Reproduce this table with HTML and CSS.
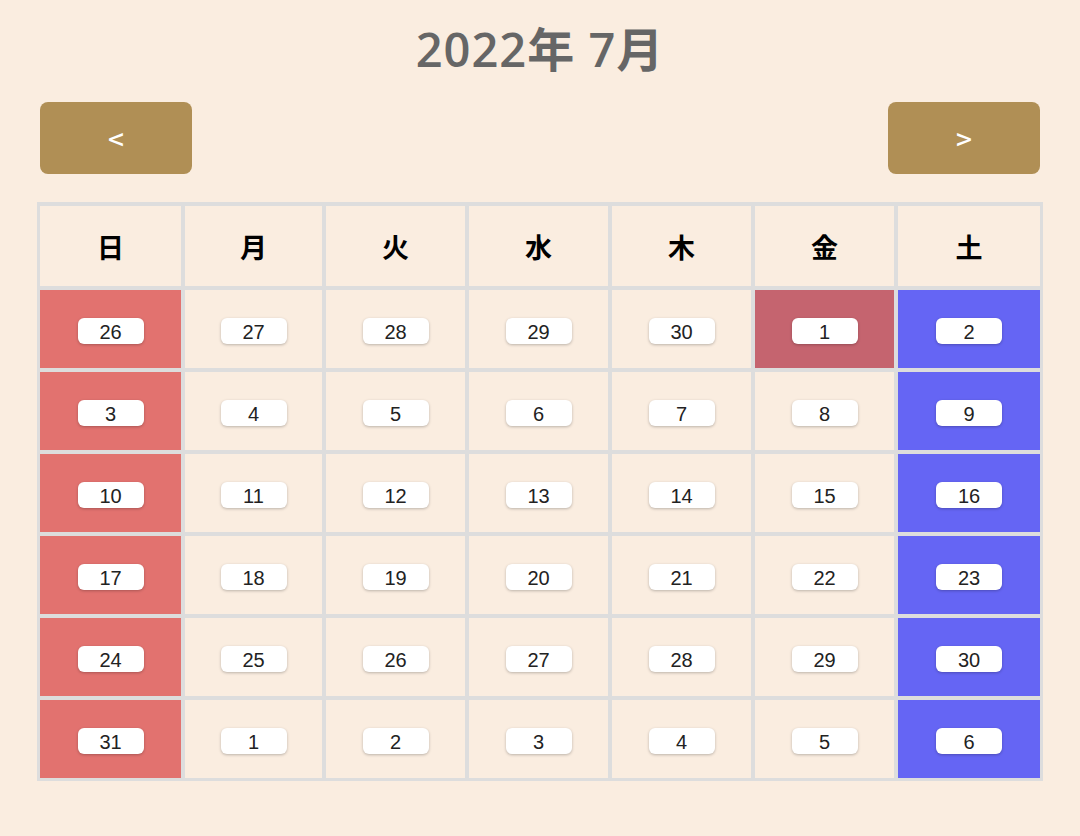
FILE: index.html
```html
<!DOCTYPE html>
<html lang="ja">
<head>
<meta charset="utf-8">
<link rel="stylesheet" href="styles.css">
</head>
<body>
<div class="page">
  <h1 class="title">2022年 7月</h1>
  <div class="nav">
    <button class="navbtn">&lt;</button>
    <button class="navbtn">&gt;</button>
  </div>
  <div class="cal">
    <div class="hd">日</div><div class="hd">月</div><div class="hd">火</div><div class="hd">水</div><div class="hd">木</div><div class="hd">金</div><div class="hd">土</div>

    <div class="day sun"><span class="pill">26</span></div><div class="day"><span class="pill">27</span></div><div class="day"><span class="pill">28</span></div><div class="day"><span class="pill">29</span></div><div class="day"><span class="pill">30</span></div><div class="day today"><span class="pill">1</span></div><div class="day sat"><span class="pill">2</span></div>

    <div class="day sun"><span class="pill">3</span></div><div class="day"><span class="pill">4</span></div><div class="day"><span class="pill">5</span></div><div class="day"><span class="pill">6</span></div><div class="day"><span class="pill">7</span></div><div class="day"><span class="pill">8</span></div><div class="day sat"><span class="pill">9</span></div>

    <div class="day sun"><span class="pill">10</span></div><div class="day"><span class="pill">11</span></div><div class="day"><span class="pill">12</span></div><div class="day"><span class="pill">13</span></div><div class="day"><span class="pill">14</span></div><div class="day"><span class="pill">15</span></div><div class="day sat"><span class="pill">16</span></div>

    <div class="day sun"><span class="pill">17</span></div><div class="day"><span class="pill">18</span></div><div class="day"><span class="pill">19</span></div><div class="day"><span class="pill">20</span></div><div class="day"><span class="pill">21</span></div><div class="day"><span class="pill">22</span></div><div class="day sat"><span class="pill">23</span></div>

    <div class="day sun"><span class="pill">24</span></div><div class="day"><span class="pill">25</span></div><div class="day"><span class="pill">26</span></div><div class="day"><span class="pill">27</span></div><div class="day"><span class="pill">28</span></div><div class="day"><span class="pill">29</span></div><div class="day sat"><span class="pill">30</span></div>

    <div class="day sun"><span class="pill">31</span></div><div class="day"><span class="pill">1</span></div><div class="day"><span class="pill">2</span></div><div class="day"><span class="pill">3</span></div><div class="day"><span class="pill">4</span></div><div class="day"><span class="pill">5</span></div><div class="day sat"><span class="pill">6</span></div>
  </div>
</div>
</body>
</html>
```

FILE: styles.css
```css
* { box-sizing: border-box; }
html, body {
  margin: 0;
  padding: 0;
  background: #faede0;
}
body {
  font-family: "Noto Sans CJK JP", "Noto Sans", sans-serif;
  width: 1080px;
  height: 836px;
  overflow: hidden;
}
.page {
  padding: 0 37px;
}
.title {
  margin: 0;
  padding-top: 17px;
  height: 102px;
  text-align: center;
  font-family: "Open Sans", "Noto Sans CJK JP", sans-serif;
  font-size: 47px;
  line-height: 64px;
  font-weight: 600;
  letter-spacing: 1px;
  color: #666666;
}
.nav {
  display: flex;
  justify-content: space-between;
  padding: 0 3px;
}
.navbtn {
  width: 152px;
  height: 72px;
  border: none;
  border-radius: 8px;
  background: #b08f55;
  color: #ffffff;
  font-family: "Noto Sans CJK JP", sans-serif;
  font-size: 28px;
  font-weight: 500;
  padding: 0;
}
.cal {
  margin-top: 28px;
  display: grid;
  grid-template-columns: 141px 137px 139px 139px 139px 139px 142px;
  grid-template-rows: 80px repeat(6, 78px);
  gap: 4px;
  padding: 4px 3px 3px 3px;
  background: #dddddd;
  width: 1006px;
}
.hd {
  background: #faede0;
  display: flex;
  align-items: center;
  justify-content: center;
  font-size: 27px;
  font-weight: 700;
  color: #000;
}
.day {
  background: #faede0;
  display: flex;
  align-items: center;
  justify-content: center;
}
.day.sun { background: #e2726f; }
.day.sat { background: #6565f4; }
.day.today { background: #c5646f; }
.pill {
  width: 66px;
  height: 26px;
  margin-top: 4px;
  background: #ffffff;
  border-radius: 6px;
  box-shadow: 0 1px 3px rgba(0,0,0,0.25);
  display: flex;
  align-items: center;
  justify-content: center;
  font-family: "Liberation Sans", sans-serif;
  font-size: 20px;
  color: #222222;
  line-height: 1;
  padding-top: 1px;
}
```
